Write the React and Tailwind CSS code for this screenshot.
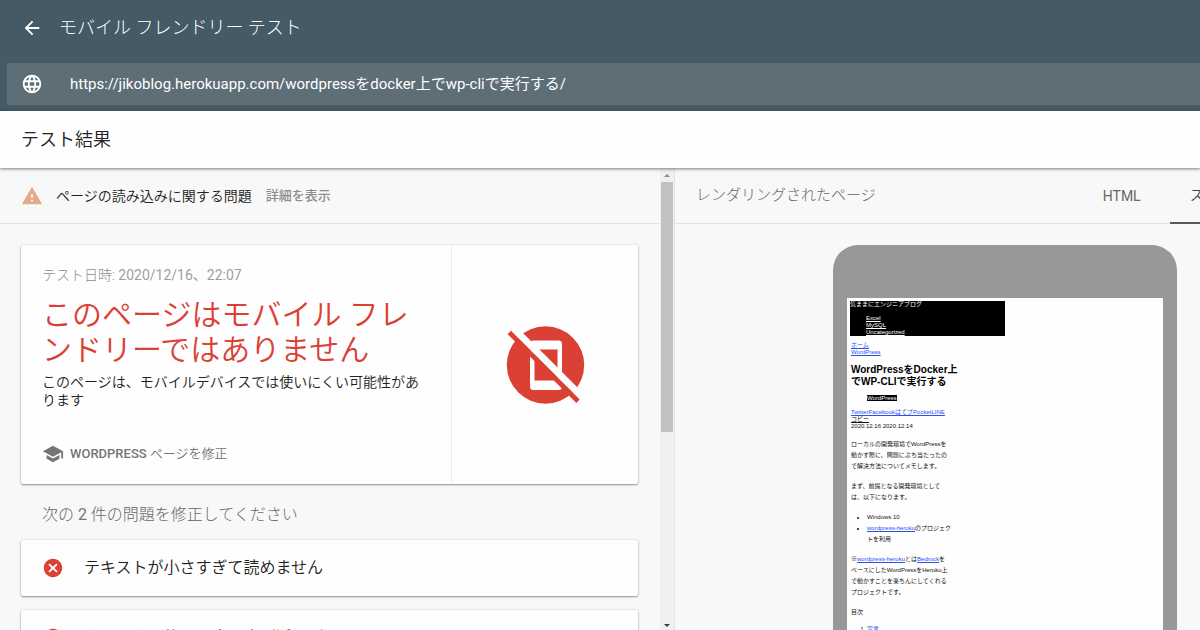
import React from 'react';
import { MdArrowBack, MdCancel, MdLanguage, MdSchool, MdWarning } from 'react-icons/md';

const cardShadow = 'rounded-[2px] bg-[#fefefe] shadow-[0_1px_2px_rgba(0,0,0,0.4),0_0_2px_rgba(0,0,0,0.15)]';

function NotMobileIcon() {
  return (
    <svg viewBox="0 0 80 80" className="size-20" role="img" aria-label="モバイル非対応">
      <circle cx="40.5" cy="40" r="38.7" fill="#db4035" />
      <path
        fill="#fefefe"
        fillRule="evenodd"
        d="M28.5 15.500h25a3.500 3.500 0 0 1 3.500 3.500v42.500a3.500 3.500 0 0 1-3.500 3.500h-25a3.500 3.500 0 0 1-3.500-3.500v-42.500a3.500 3.500 0 0 1 3.500-3.500zM29.500 24.500v31h23v-31z"
      />
      <path d="M5 0L80 75" stroke="#fefefe" strokeWidth="7" />
      <path d="M4.300 7.500L73 76.200" stroke="#db4035" strokeWidth="4.800" />
    </svg>
  );
}

function Issue({ children }) {
  return (
    <li className={`${cardShadow} flex h-14 items-center gap-5 px-[21px]`}>
      <MdCancel className="size-[22px] shrink-0 text-[#db4035]" />
      <a href="#issue" className="text-base leading-6 text-[#212121]">{children}</a>
    </li>
  );
}

function Scrollbar() {
  return (
    <div aria-hidden="true" className="flex w-[15px] shrink-0 flex-col items-center border-r border-[#e2e2e2] bg-[#f0f0f0]">
      <div className="flex h-[14px] items-center">
        <svg viewBox="0 0 6 3" className="h-[3px] w-[6px]"><path d="M0 3L3 0L6 3z" fill="#8a8a8a" /></svg>
      </div>
      <div className="flex w-full flex-1 flex-col px-px">
        <div className="h-[57%] bg-[#c1c1c1]" />
      </div>
      <div className="flex h-[10px] items-center">
        <svg viewBox="0 0 6 3" className="h-[3px] w-[6px]"><path d="M0 0L3 3L6 0z" fill="#404040" /></svg>
      </div>
    </div>
  );
}

function BlogPage() {
  const link = 'text-[#2b50ee] underline';
  return (
    <div className="min-h-[640px] bg-[#fefefe] p-[3px] text-[6px] leading-[11px] font-normal text-[#111] [font-family:'Liberation_Sans','Noto_Sans_CJK_JP',sans-serif]">
      <div className="h-[35px] w-1/2 bg-black leading-[7px] text-white">
        <p>気ままにエンジニアブログ</p>
        <ul className="mt-[7px] pl-4 underline">
          <li><a href="#excel">Excel</a></li>
          <li><a href="#mysql">MySQL</a></li>
          <li><a href="#uncategorized">Uncategorized</a></li>
        </ul>
      </div>
      <div className="px-px">
        <div className="mt-[6px] flex flex-col items-start leading-[7px]">
          <a href="#home" className={link}>ホーム</a>
          <a href="#wordpress" className={link}>WordPress</a>
        </div>
        <h2 className="mt-2 text-[10px] leading-3 font-bold text-black">WordPressをDocker上<br />でWP-CLIで実行する</h2>
        <p className="mt-[7px] pl-4 leading-[7px]"><span className="bg-black text-white">WordPress</span></p>
        <div className="mt-[7px] leading-[7px]">
          <p className={link}><a href="#tw">Twitter</a><a href="#fb">Facebook</a><a href="#hb">はてブ</a><a href="#pk">Pocket</a><a href="#ln">LINE</a></p>
          <button type="button" className="block underline">コピー</button>
          <p>2020.12.16 2020.12.14</p>
        </div>
        <p className="mt-[9px]">ローカルの開発環境でWordPressを<br />動かす際に、問題にぶち当たったの<br />で解決方法についてメモします。</p>
        <p className="mt-[9px]">まず、前提となる開発環境として<br />は、以下になります。</p>
        <ul className="mt-[9px] list-disc pl-4">
          <li>Windows 10</li>
          <li><a href="#repo" className={link}>wordpress-heroku</a>のプロジェク<br />トを利用</li>
        </ul>
        <p className="mt-[9px]">※<a href="#repo" className={link}>wordpress-heroku</a>とは<a href="#bedrock" className={link}>Bedrock</a>を<br />ベースにしたWordPressをHeroku上<br />で動かすことを楽ちんにしてくれる<br />プロジェクトです。</p>
        <p className="mt-[9px]">目次</p>
        <ol className="mt-[6px] list-decimal pl-4">
          <li><a href="#ref" className={link}>宣言</a></li>
        </ol>
      </div>
    </div>
  );
}

export default function App() {
  return (
    <div className="flex h-screen flex-col overflow-hidden bg-[#f8f8f8] font-[350] [font-family:Roboto,'Noto_Sans_CJK_JP',sans-serif]">
      <header className="flex h-[111px] shrink-0 flex-col bg-[#455a64] text-white">
        <div className="flex h-14 items-center gap-4 pl-[21px]">
          <button type="button" aria-label="戻る"><MdArrowBack className="size-[22px]" /></button>
          <h1 className="text-lg leading-6 font-light">モバイル フレンドリー テスト</h1>
        </div>
        <label className="mt-[7px] ml-[7px] flex h-[42px] items-center gap-[27px] rounded-l-[2px] bg-[#5d6e77] pl-[14px]">
          <MdLanguage className="size-[22px] shrink-0" />
          <input
            type="text"
            aria-label="URL"
            defaultValue="https://jikoblog.herokuapp.com/wordpressをdocker上でwp-cliで実行する/"
            className="min-w-0 flex-1 bg-transparent text-[15px] font-normal outline-none"
          />
        </label>
      </header>
      <div className="relative z-10 flex h-[57px] shrink-0 items-center bg-[#fefefe] pl-[21px] shadow-[0_1px_3px_rgba(0,0,0,0.5)]">
        <h2 className="text-lg leading-6 text-[#212121]">テスト結果</h2>
      </div>
      <div className="flex min-h-0 flex-1">
        <section className="flex w-[56.25%] shrink-0">
          <div className="min-w-0 flex-1 overflow-hidden">
            <div className="flex h-14 items-center border-b border-[#e2e2e2] pl-[21px]">
              <MdWarning className="size-[22px] text-[#e5aa86]" />
              <p className="ml-[13px] text-sm text-[#212121]">ページの読み込みに関する問題</p>
              <button type="button" className="ml-[14px] text-[13px] font-medium text-[#8c8c8c]">詳細を表示</button>
            </div>
            <main className="pt-[21px] pr-[22px] pl-[21px]">
              <article className={`${cardShadow} flex h-[239px]`}>
                <div className="flex w-[431px] shrink-0 flex-col items-start border-r border-[#ebebeb] px-[21px] pt-5">
                  <p className="text-sm font-light text-[#8c8c8c]">テスト日時: <span className="font-normal text-[#9e9e9e]">2020/12/16、22:07</span></p>
                  <h3 className="mt-3 text-3xl leading-[35px] text-[#db4035]">このページはモバイル フレンドリーではありません</h3>
                  <p className="mt-[6px] text-sm leading-[18px] text-[#212121]">このページは、モバイルデバイスでは使いにくい可能性があります</p>
                  <a href="#fix" className="mt-[34px] flex items-center gap-[6px] text-[13px] text-[#757575]">
                    <MdSchool className="size-[22px]" />
                    <span><span className="font-medium">WORDPRESS</span> ページを修正</span>
                  </a>
                </div>
                <div className="flex flex-1 items-center justify-center"><NotMobileIcon /></div>
              </article>
              <h3 className="mt-[21px] mb-[15px] pl-[21px] text-base leading-5 font-light text-[#666]">次の <span className="font-normal text-[#757575]">2</span> 件の問題を修正してください</h3>
              <ul className="flex flex-col gap-[14px]">
                <Issue>テキストが小さすぎて読めません</Issue>
                <Issue>クリック可能な要素同士が近すぎます</Issue>
              </ul>
            </main>
          </div>
          <Scrollbar />
        </section>
        <section className="min-w-0 flex-1 overflow-hidden">
          <div className="w-[660px]">
            <div className="flex h-14 items-center border-b border-[#e2e2e2] pl-[21px]">
              <h2 className="text-[15px] font-light text-[#666]">レンダリングされたページ</h2>
              <div role="tablist" className="ml-auto flex h-14 text-sm text-[#757575]">
                <button type="button" role="tab" aria-selected="false" className="w-24 font-normal text-[#666]">HTML</button>
                <button type="button" role="tab" aria-selected="true" className="border-b-2 border-[#5f5658] px-5 text-[#424242]">スクリーンショット</button>
              </div>
            </div>
            <div className="mx-auto mt-[21px] w-[344px] rounded-t-[25px] bg-[#989898] px-[14px] pt-[53px]">
              <BlogPage />
            </div>
          </div>
        </section>
      </div>
    </div>
  );
}
